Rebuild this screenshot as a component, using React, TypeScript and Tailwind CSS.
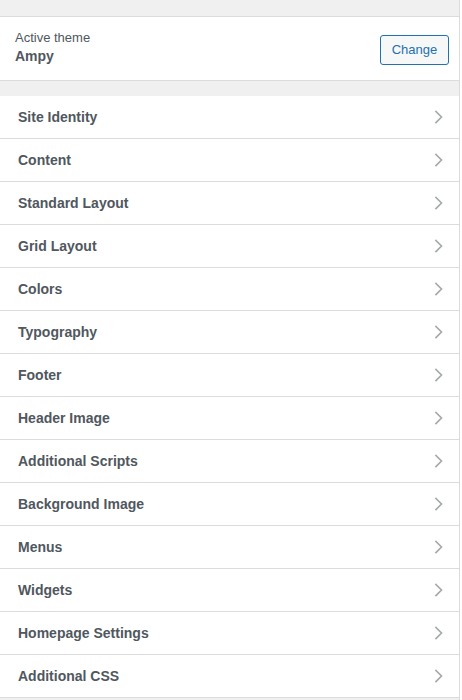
import React from "react";

const items = [
  "Site Identity",
  "Content",
  "Standard Layout",
  "Grid Layout",
  "Colors",
  "Typography",
  "Footer",
  "Header Image",
  "Additional Scripts",
  "Background Image",
  "Menus",
  "Widgets",
  "Homepage Settings",
  "Additional CSS",
];

function Chevron() {
  return (
    <svg width="10" height="16" viewBox="0 0 10 16" fill="none">
      <path d="M2 2.5 L7.5 8 L2 13.5" stroke="#a7aaad" strokeWidth="1.7" strokeLinecap="square" />
    </svg>
  );
}

export default function App() {
  return (
    <div className="w-[462px] h-[700px] bg-white overflow-hidden" style={{ fontFamily: '"Liberation Sans", Arial, sans-serif' }}>
      <div className="w-[460px] h-[700px] bg-[#f0f0f1] border-r border-[#dcdcde] flex flex-col">
        <div className="h-[16px]" />
        <div className="h-[65px] bg-white border-y border-[#dcdcde] flex items-center justify-between pl-[15px] pr-[10px]">
          <div className="flex flex-col mb-[3px]">
            <span className="text-[13px] leading-[18px] text-[#50575e]">Active theme</span>
            <span className="text-[14px] leading-[18px] font-bold text-[#50575e]">Ampy</span>
          </div>
          <button className="h-[30px] w-[69px] mt-[2px] rounded-[3px] border border-[#2271b1] bg-[#f6f7f7] text-[#2271b1] text-[13px] leading-none">
            Change
          </button>
        </div>
        <div className="h-[15px]" />
        <ul className="flex flex-col">
          {items.map((t) => (
            <li key={t} className="h-[43px] bg-white border-b border-[#dcdcde] flex items-center justify-between pl-[18px] pr-[15px]">
              <span className="text-[14px] font-bold text-[#50575e]">{t}</span>
              <Chevron />
            </li>
          ))}
        </ul>
      </div>
    </div>
  );
}
